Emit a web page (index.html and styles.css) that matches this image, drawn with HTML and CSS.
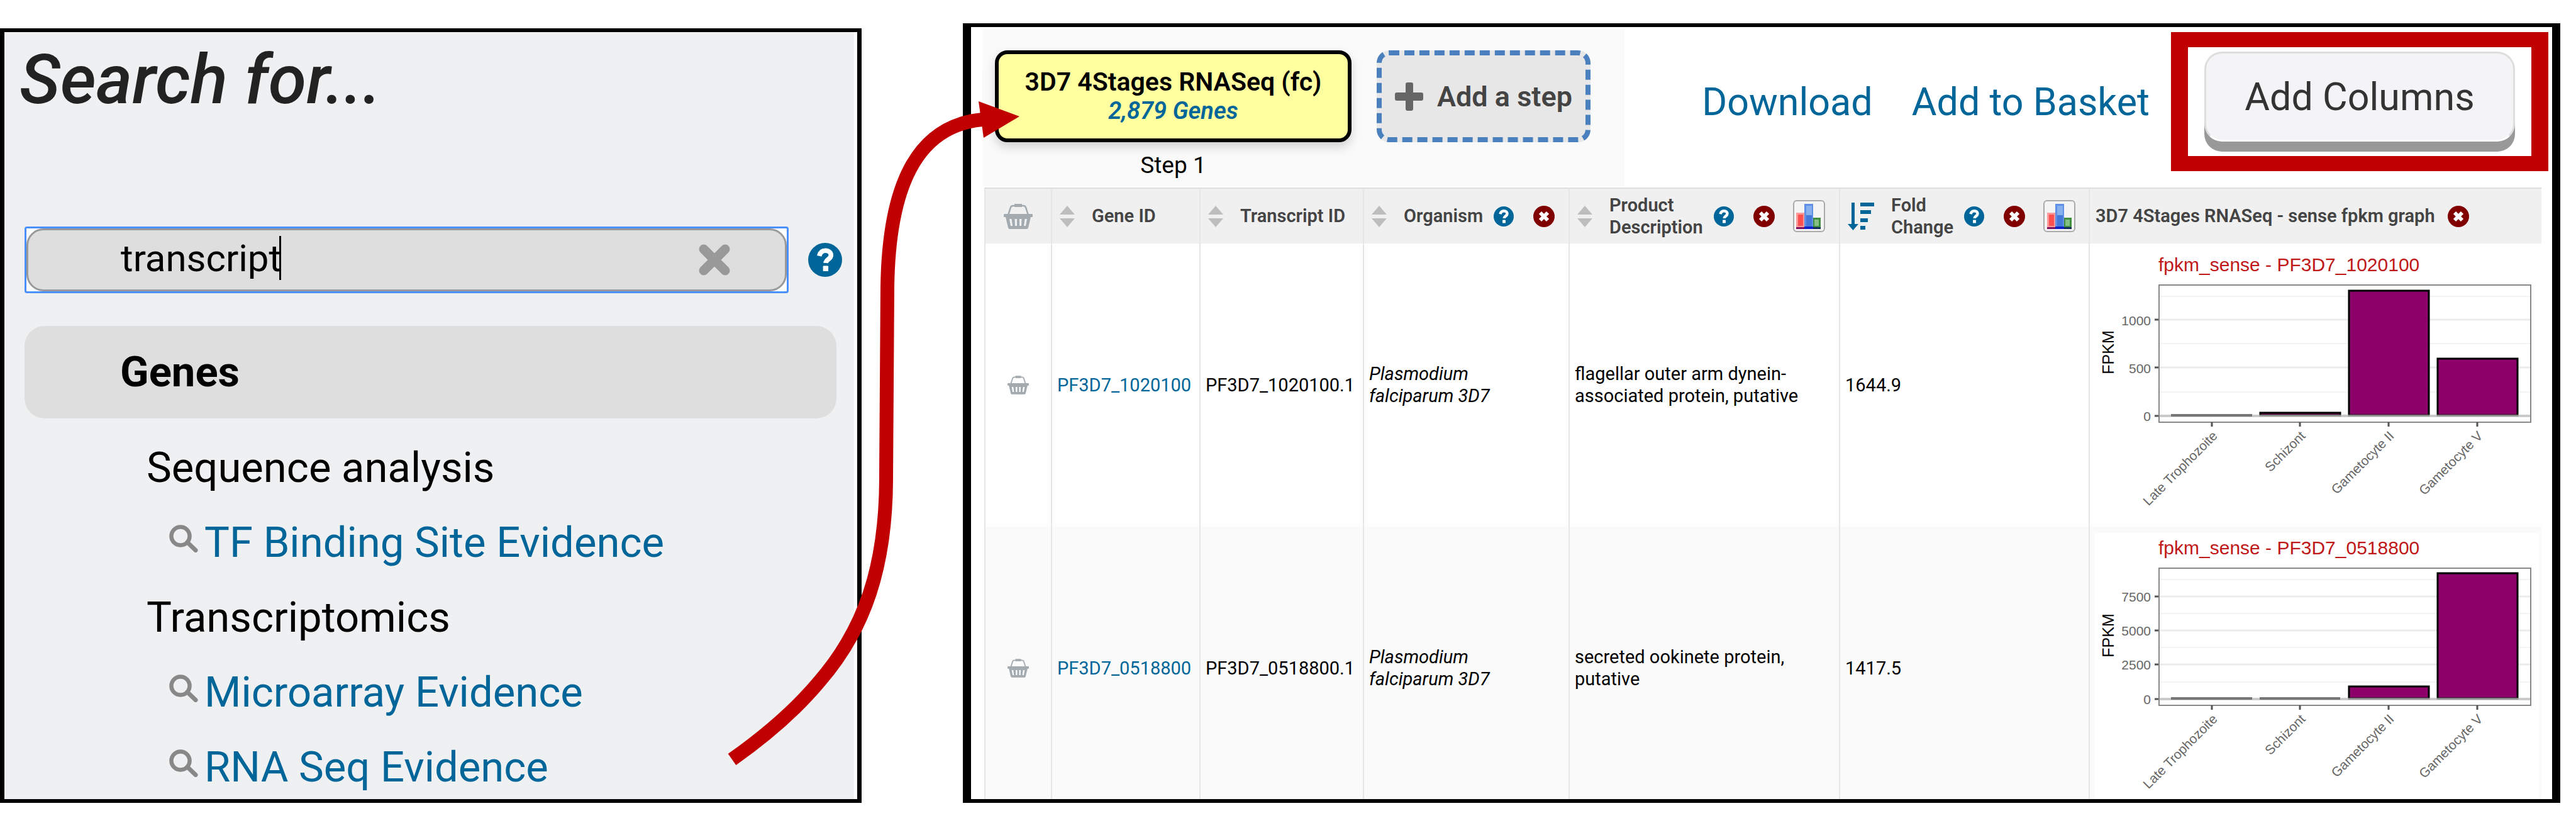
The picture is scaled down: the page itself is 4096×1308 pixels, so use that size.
FILE: index.html
```html
<!DOCTYPE html>
<html lang="en">
<head>
<meta charset="utf-8">
<title>Search for transcriptomics evidence</title>
<link rel="stylesheet" href="styles.css">
</head>
<body>
<svg class="defs" aria-hidden="true">
  <symbol id="help" viewBox="0 0 32 32">
    <circle cx="16" cy="16" r="16" fill="#069"/>
    <path d="M10.5 12.3C11.3 8.9 13.4 7.3 16.3 7.3c3 0 5.2 1.9 5.2 4.4 0 3.6-4.700 3.700-4.900 7.300" fill="none" stroke="#fff" stroke-width="4.500"/>
    <rect x="14" y="21.600" width="5" height="5" rx=".6" fill="#fff"/>
  </symbol>
  <symbol id="remove" viewBox="0 0 34 34">
    <circle cx="17" cy="17" r="17" fill="maroon"/>
    <path d="M11 11l12 12M23 11l-12 12" stroke="#fff" stroke-width="6"/>
  </symbol>
  <symbol id="cross" viewBox="0 0 52 50">
    <path d="M9 8l34 34M43 8L9 42" stroke="#999" stroke-width="15" stroke-linecap="round"/>
  </symbol>
  <symbol id="search" viewBox="0 0 46 44">
    <circle cx="18" cy="18" r="14.500" fill="none" stroke="#888" stroke-width="6.500"/>
    <path d="M29 28l13 12.500" stroke="#888" stroke-width="7" stroke-linecap="round"/>
  </symbol>
  <symbol id="plus" viewBox="0 0 45 45">
    <path d="M17 3q0-3 3-3h6q3 0 3 3v13h13q3 0 3 3v7q0 3-3 3H29v13q0 3-3 3h-6q-3 0-3-3V29H3q-3 0-3-3v-7q0-3 3-3h14z" fill="#666"/>
  </symbol>
  <symbol id="sort" viewBox="0 0 24 34">
    <path d="M12 0l12 14H0zM0 20h24L12 34z" fill="#bdbdbd"/>
  </symbol>
  <symbol id="sorted" viewBox="0 0 42 44">
    <path d="M6 0h5v34h6L8.500 44 0 34h6zM20 0h22v6H20zM20 12h17v6H20zM20 25h12v6H20zM20 37h8v6h-8z" fill="#069"/>
  </symbol>
  <symbol id="basket" viewBox="0 0 46 40">
    <path d="M7 18L11 5.500Q12 3 15 3h16q3 0 4 2.500L39 18" fill="none" stroke="#a3abb0" stroke-width="2.500"/>
    <path d="M17 0h12v5H17z" fill="#a3abb0"/>
    <path fill-rule="evenodd" d="M1 16h44q1 0 1 2v2q0 1-1 1h-2l-4 17q-.5 2-2.500 2h-27Q7.500 40 7 38L3 21H1q-1 0-1-1v-2q0-2 1-2zM9 24l2 11h3l-1.500-11zM17.500 24l.5 11h3V24zM25 24v11h3l.5-11zM33.500 24L32 35h3l2-11z" fill="#a3abb0"/>
  </symbol>
  <symbol id="bars" viewBox="0 0 40 40">
    <path d="M0 14h13v23H0z" fill="#ff9a9a"/><path d="M3 17h8v18H3z" fill="#ff4f4f"/>
    <path d="M13 0h14v37H13z" fill="#5f8fe6"/><path d="M16 3h9v34h-9z" fill="#86b0ec"/><path d="M16 18h9v19h-9z" fill="#4478d8"/>
    <path d="M27 22h12v15H27z" fill="#3f8f3f"/><path d="M29 25h7v10h-7z" fill="#86bf86"/>
    <path d="M0 37h13v3H0z" fill="#7a1060"/><path d="M13 36h14v4H13z" fill="#1022c8"/><path d="M27 37h12v3H27z" fill="#112a5c"/>
  </symbol>
</svg>

<main class="page">
  <section class="panel search-panel">
    <div class="search-body">
      <h1>Search for...</h1>
      <form class="search-row">
        <div class="field">
          <input type="text" value="transcript" aria-label="Search for">
          <span class="caret"></span>
          <button type="button" class="icon-button clear" aria-label="Clear"><svg width="52" height="50"><use href="#cross"/></svg></button>
        </div>
        <button type="button" class="icon-button" aria-label="Help"><svg width="54" height="54"><use href="#help"/></svg></button>
      </form>
      <h2>Genes</h2>
      <ul class="tree">
        <li>Sequence analysis</li>
        <li class="leaf"><svg width="46" height="44"><use href="#search"/></svg><a href="#tf">TF Binding Site Evidence</a></li>
        <li>Transcriptomics</li>
        <li class="leaf"><svg width="46" height="44"><use href="#search"/></svg><a href="#microarray">Microarray Evidence</a></li>
        <li class="leaf"><svg width="46" height="44"><use href="#search"/></svg><a href="#rnaseq">RNA Seq Evidence</a></li>
      </ul>
    </div>
  </section>

  <section class="panel results-panel">
    <div class="toolbar">
      <div class="steps">
        <div class="step">
          <div class="step-box"><strong>3D7 4Stages RNASeq (fc)</strong><a href="#genes">2,879 Genes</a></div>
          <span class="step-label">Step 1</span>
        </div>
        <button type="button" class="add-step"><svg width="45" height="45"><use href="#plus"/></svg>Add a step</button>
      </div>
      <nav class="actions">
        <a href="#download">Download</a>
        <a href="#basket">Add to Basket</a>
        <div class="highlight"><button type="button" class="add-columns">Add Columns</button></div>
      </nav>
    </div>
    <div class="table-wrap">
      <table>
        <colgroup><col class="c-basket"><col class="c-gene"><col class="c-transcript"><col class="c-organism"><col class="c-product"><col class="c-fold"><col></colgroup>
        <thead>
          <tr>
            <th><div class="basket"><svg width="46" height="40"><use href="#basket"/></svg></div></th>
            <th><div class="head"><button type="button" class="icon-button sort" aria-label="Sort"><svg width="24" height="34"><use href="#sort"/></svg></button>Gene ID</div></th>
            <th><div class="head"><button type="button" class="icon-button sort" aria-label="Sort"><svg width="24" height="34"><use href="#sort"/></svg></button>Transcript ID</div></th>
            <th><div class="head"><button type="button" class="icon-button sort" aria-label="Sort"><svg width="24" height="34"><use href="#sort"/></svg></button>Organism<button type="button" class="icon-button help" aria-label="Help"><svg width="32" height="32"><use href="#help"/></svg></button><button type="button" class="icon-button remove" aria-label="Remove"><svg width="34" height="34"><use href="#remove"/></svg></button></div></th>
            <th><div class="head"><button type="button" class="icon-button sort" aria-label="Sort"><svg width="24" height="34"><use href="#sort"/></svg></button><span>Product<br>Description</span><button type="button" class="icon-button help" aria-label="Help"><svg width="32" height="32"><use href="#help"/></svg></button><button type="button" class="icon-button remove" aria-label="Remove"><svg width="34" height="34"><use href="#remove"/></svg></button><button type="button" class="histogram" aria-label="Histogram"><svg width="40" height="40"><use href="#bars"/></svg></button></div></th>
            <th><div class="head"><button type="button" class="icon-button sort" aria-label="Sorted"><svg width="42" height="44"><use href="#sorted"/></svg></button><span>Fold<br>Change</span><button type="button" class="icon-button help" aria-label="Help"><svg width="32" height="32"><use href="#help"/></svg></button><button type="button" class="icon-button remove" aria-label="Remove"><svg width="34" height="34"><use href="#remove"/></svg></button><button type="button" class="histogram" aria-label="Histogram"><svg width="40" height="40"><use href="#bars"/></svg></button></div></th>
            <th><div class="head graph-head">3D7 4Stages RNASeq - sense fpkm graph<button type="button" class="icon-button" aria-label="Remove"><svg width="34" height="34"><use href="#remove"/></svg></button></div></th>
          </tr>
        </thead>
        <tbody>
          <tr>
            <td><div class="basket"><svg width="34" height="30"><use href="#basket"/></svg></div></td>
            <td><a href="#PF3D7_1020100">PF3D7_1020100</a></td>
            <td>PF3D7_1020100.1</td>
            <td><em>Plasmodium<br>falciparum 3D7</em></td>
            <td>flagellar outer arm dynein-<br>associated protein, putative</td>
            <td>1644.9</td>
            <td class="graph">
              <svg class="chart" viewBox="0 0 706 422" role="img" aria-label="fpkm_sense - PF3D7_1020100">
                <rect width="706" height="422" fill="#fff"/>
                <text class="chart-title" x="101" y="34">fpkm_sense - PF3D7_1020100</text>
                <text class="axis-title" text-anchor="middle" transform="translate(30 163) rotate(-90)">FPKM</text>
                <path class="minor" d="M102 74h591M102 149h591M102 226h591"/>
                <path class="major" d="M102 111h591M102 187h591M102 264h591"/>
                <path class="tick" d="M95 111h7M95 187h7M95 264h7"/>
                <g class="axis-text" text-anchor="end"><text x="89" y="120">1000</text><text x="89" y="196">500</text><text x="89" y="272">0</text></g>
                <path class="bar" d="M263 259h127v4h-127zM404 65h127v198h-127zM545 173h127v90h-127z"/>
                <path class="zero" d="M102 264h591"/>
                <path class="flat" d="M121 263h129"/>
                <rect class="frame" x="102" y="56" width="591" height="218"/>
                <path class="tick" d="M186 274v7M326 274v7M467 274v7M608 274v7"/>
                <g class="axis-text" text-anchor="end">
                  <text transform="translate(196 297) rotate(-45)">Late Trophozoite</text>
                  <text transform="translate(336 297) rotate(-45)">Schizont</text>
                  <text transform="translate(477 297) rotate(-45)">Gametocyte II</text>
                  <text transform="translate(618 297) rotate(-45)">Gametocyte V</text>
                </g>
              </svg>
            </td>
          </tr>
          <tr>
            <td><div class="basket"><svg width="34" height="30"><use href="#basket"/></svg></div></td>
            <td><a href="#PF3D7_0518800">PF3D7_0518800</a></td>
            <td>PF3D7_0518800.1</td>
            <td><em>Plasmodium<br>falciparum 3D7</em></td>
            <td>secreted ookinete protein,<br>putative</td>
            <td>1417.5</td>
            <td class="graph">
              <svg class="chart" viewBox="0 0 706 422" role="img" aria-label="fpkm_sense - PF3D7_0518800">
                <rect width="706" height="422" fill="#fff"/>
                <text class="chart-title" x="101" y="34">fpkm_sense - PF3D7_0518800</text>
                <text class="axis-title" text-anchor="middle" transform="translate(30 163) rotate(-90)">FPKM</text>
                <path class="minor" d="M102 74h591M102 128h591M102 182h591M102 237h591"/>
                <path class="major" d="M102 101h591M102 155h591M102 209h591M102 264h591"/>
                <path class="tick" d="M95 101h7M95 155h7M95 209h7M95 264h7"/>
                <g class="axis-text" text-anchor="end"><text x="89" y="109">7500</text><text x="89" y="163">5000</text><text x="89" y="217">2500</text><text x="89" y="272">0</text></g>
                <path class="bar" d="M404 244h127v19h-127zM545 64h127v199h-127z"/>
                <path class="zero" d="M102 264h591"/>
                <path class="flat" d="M121 263h129M262 263h128"/>
                <rect class="frame" x="102" y="56" width="591" height="218"/>
                <path class="tick" d="M186 274v7M326 274v7M467 274v7M608 274v7"/>
                <g class="axis-text" text-anchor="end">
                  <text transform="translate(196 297) rotate(-45)">Late Trophozoite</text>
                  <text transform="translate(336 297) rotate(-45)">Schizont</text>
                  <text transform="translate(477 297) rotate(-45)">Gametocyte II</text>
                  <text transform="translate(618 297) rotate(-45)">Gametocyte V</text>
                </g>
              </svg>
            </td>
          </tr>
        </tbody>
      </table>
    </div>
  </section>

  <svg class="arrow" viewBox="0 0 4096 1308" aria-hidden="true">
    <path d="M1164 1207C1215 1171 1262 1132 1303 1083C1375 1000 1409 900 1409 759L1411 457C1413 300 1455 200 1562 190" fill="none" stroke="#c00000" stroke-width="22"/>
    <path d="M1556 161L1621 185L1564 219z" fill="#c00000"/>
  </svg>
</main>
</body>
</html>
```

FILE: styles.css
```css
* {
  box-sizing: border-box;
}

body {
  margin: 0;
  background: #fff;
  color: #000;
  font-family: Roboto, "Liberation Sans", sans-serif;
}

a {
  color: #069;
  text-decoration: none;
}

button {
  font: inherit;
  color: inherit;
  cursor: pointer;
}

svg {
  display: block;
  flex: none;
}

.defs {
  position: absolute;
  width: 0;
  height: 0;
}

.page {
  position: relative;
  display: grid;
  grid-template-columns: 1370fr 2540fr;
  column-gap: 161px;
  padding: 37px 25px 31px 0;
}

.panel {
  border: 6px solid #000;
  background: #fff;
}

.arrow {
  position: absolute;
  top: 0;
  left: 0;
  width: 100%;
  pointer-events: none;
}

.icon-button {
  padding: 0;
  border: 0;
  background: none;
}

/* Search panel */

.search-panel {
  margin-top: 8px;
  border-width: 6px 7px;
  padding-right: 5px;
}

.search-body {
  height: 100%;
  padding: 13px 0 1px;
  background: #eef0f2;
}

h1 {
  margin: 0;
  padding: 0 24px;
  color: #222;
  font-size: 110px;
  font-style: italic;
  font-weight: 500;
  line-height: 126px;
}

.search-row {
  display: flex;
  align-items: center;
  gap: 31px;
  margin-top: 170px;
  padding: 0 19px 0 32px;
}

.field {
  position: relative;
  flex: 1;
  height: 106px;
  border: 3px solid #4a90ff;
  border-radius: 4px;
  background: #fff;
}

.field input {
  width: 100%;
  height: 100%;
  padding: 0 120px 5px 147px;
  border: 3px solid #999;
  border-radius: 27px;
  background: #dedede;
  color: #000;
  font: 60px Roboto, "Liberation Sans", sans-serif;
  outline: none;
}

.caret {
  position: absolute;
  top: 12px;
  left: 402px;
  width: 3px;
  height: 70px;
  background: #000;
}

.clear {
  position: absolute;
  top: 25px;
  right: 89px;
}

h2 {
  margin: 52px 28px 0 32px;
  padding-left: 152px;
  border-radius: 32px;
  background: #dedede;
  font-size: 67px;
  font-weight: 700;
  line-height: 147px;
}

.tree {
  display: grid;
  gap: 19px;
  margin: 28px 0 0;
  padding: 0 0 0 226px;
  list-style: none;
  font-size: 67px;
  line-height: 100px;
}

.leaf {
  display: flex;
  gap: 10px;
  padding-left: 36px;
}

.leaf svg {
  margin-top: 22px;
}

/* Results panel */

.results-panel {
  display: flex;
  flex-direction: column;
  border-width: 6px 13px;
}

.toolbar {
  display: flex;
  justify-content: space-between;
  align-items: flex-start;
  padding: 3px 6px 0 18px;
}

.steps {
  display: flex;
  align-items: flex-start;
  gap: 40px;
  height: 250px;
  padding: 34px 54px 0 20px;
  background: #fafafa;
}

.step {
  display: grid;
  gap: 16px;
  justify-items: center;
}

.step-box {
  display: flex;
  flex-direction: column;
  align-items: center;
  justify-content: center;
  width: 567px;
  height: 146px;
  border: 6px solid #000;
  border-radius: 20px;
  background: #ffffa0;
  box-shadow: 0 8px 16px rgba(0, 0, 0, .16);
  font-size: 41px;
  line-height: 46px;
}

.step-box strong {
  font-weight: 600;
}

.step-box a {
  font-size: 38px;
  font-style: italic;
  font-weight: 600;
}

.step-label {
  font-size: 37px;
  line-height: 42px;
}

.add-step {
  display: flex;
  align-items: center;
  justify-content: center;
  gap: 22px;
  width: 340px;
  height: 146px;
  padding: 0;
  border: 8px dashed #4a80be;
  border-radius: 20px;
  background: #e7e7e7;
  color: #444;
  font-size: 45px;
  font-weight: 600;
}

.actions {
  display: flex;
  align-items: center;
  margin-top: 5px;
  font-size: 61px;
}

.actions > a {
  margin-right: 62px;
}

.actions > a + a {
  margin-right: 34px;
}

.highlight {
  padding: 7px 26px;
  border: solid #c00000;
  border-width: 24px 27px;
}

.add-columns {
  display: block;
  width: 494px;
  height: 143px;
  margin-bottom: 16px;
  padding: 0;
  border: 3px solid #ddd;
  border-bottom-color: #fff;
  border-radius: 28px;
  background: #f4f4f7;
  box-shadow: 0 16px 0 #999;
  color: #333;
}

/* Results table */

.table-wrap {
  flex: 1 1 0;
  height: 0;
  margin: 2px 17px 0 21px;
  overflow: hidden;
}

table {
  width: 100%;
  border-collapse: separate;
  border-spacing: 0;
  table-layout: fixed;
  font-size: 29px;
  line-height: 35px;
}

.c-basket { width: 106px; }
.c-gene { width: 236px; }
.c-transcript { width: 260px; }
.c-organism { width: 327px; }
.c-product { width: 430px; }
.c-fold { width: 397px; }

th,
td {
  padding: 0;
  border-left: 2px solid #e6e6e6;
  text-align: left;
  white-space: nowrap;
}

th {
  height: 89px;
  border-top: 2px solid #ddd;
  background: #f0f0f0;
  color: #444;
  font-weight: 600;
}

td {
  height: 450px;
  padding-left: 8px;
  background: #fefefe;
}

tr:nth-child(even) td {
  background: #fafafa;
}

.basket {
  display: flex;
  justify-content: center;
}

td .basket {
  margin-left: -8px;
}

.head {
  display: flex;
  align-items: center;
  padding-left: 12px;
}

.sort {
  margin-right: 27px;
}

.help {
  margin-left: 17px;
}

.remove {
  margin-left: 31px;
}

.graph-head {
  gap: 20px;
  padding-left: 9px;
}

.histogram {
  display: grid;
  place-items: center;
  width: 51px;
  height: 51px;
  margin-left: 29px;
  padding: 0;
  border: 2px solid #aaa;
  border-radius: 6px;
  background: #f4f4f4;
}

td.graph {
  padding: 10px 4px 18px 8px;
}

.chart {
  width: 100%;
}

.chart text {
  font-family: "Liberation Sans", Arial, sans-serif;
}

.chart-title {
  fill: #c01818;
  font-size: 30px;
}

.axis-title {
  fill: #000;
  font-size: 25px;
}

.axis-text {
  fill: #666;
  font-size: 21px;
}

.minor {
  stroke: #f4f4f4;
  stroke-width: 2;
}

.major {
  stroke: #ebebeb;
  stroke-width: 3;
}

.tick {
  stroke: #555;
  stroke-width: 3;
}

.bar {
  fill: #8b0069;
  stroke: #000;
  stroke-width: 3;
}

.zero {
  stroke: #bbb;
  stroke-opacity: .7;
  stroke-width: 4;
}

.flat {
  stroke: #777;
  stroke-width: 4;
}

.frame {
  fill: none;
  stroke: #888;
  stroke-width: 2;
}
```
